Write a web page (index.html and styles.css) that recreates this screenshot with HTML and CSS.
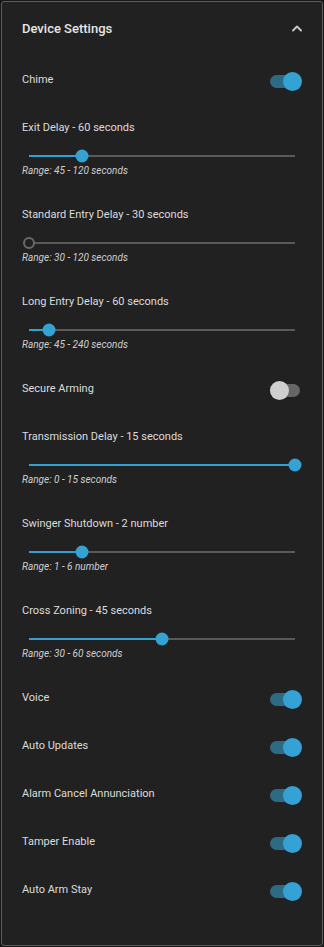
FILE: index.html
```html
<!DOCTYPE html>
<html>
<head>
<meta charset="utf-8">
<link rel="stylesheet" href="styles.css">
</head>
<body>
<div class="card">
  <div class="header">
    <span class="title">Device Settings</span>
    <svg class="chev" width="12" height="8" viewBox="0 0 12 8"><path d="M2 6.5 L6 2.5 L10 6.5" fill="none" stroke="#c4c4c4" stroke-width="2" stroke-linecap="round" stroke-linejoin="round"/></svg>
  </div>

  <div class="row"><span class="label">Chime</span><span class="toggle on"><span class="track"></span><span class="knob"></span></span></div>

  <div class="sblock">
    <div class="slabel">Exit Delay - 60 seconds</div>
    <div class="slider"><div class="rail"><div class="fill" style="width:20%"></div><div class="thumb" style="left:20%"></div></div></div>
    <div class="range">Range: 45 - 120 seconds</div>
  </div>

  <div class="sblock">
    <div class="slabel">Standard Entry Delay - 30 seconds</div>
    <div class="slider"><div class="rail"><div class="fill" style="width:0%"></div><div class="thumb zero" style="left:0%"></div></div></div>
    <div class="range">Range: 30 - 120 seconds</div>
  </div>

  <div class="sblock">
    <div class="slabel">Long Entry Delay - 60 seconds</div>
    <div class="slider"><div class="rail"><div class="fill" style="width:7.69%"></div><div class="thumb" style="left:7.69%"></div></div></div>
    <div class="range">Range: 45 - 240 seconds</div>
  </div>

  <div class="row"><span class="label">Secure Arming</span><span class="toggle off"><span class="track"></span><span class="knob"></span></span></div>

  <div class="sblock">
    <div class="slabel">Transmission Delay - 15 seconds</div>
    <div class="slider"><div class="rail"><div class="fill" style="width:100%"></div><div class="thumb" style="left:100%"></div></div></div>
    <div class="range">Range: 0 - 15 seconds</div>
  </div>

  <div class="sblock">
    <div class="slabel">Swinger Shutdown - 2 number</div>
    <div class="slider"><div class="rail"><div class="fill" style="width:20%"></div><div class="thumb" style="left:20%"></div></div></div>
    <div class="range">Range: 1 - 6 number</div>
  </div>

  <div class="sblock">
    <div class="slabel">Cross Zoning - 45 seconds</div>
    <div class="slider"><div class="rail"><div class="fill" style="width:50%"></div><div class="thumb" style="left:50%"></div></div></div>
    <div class="range">Range: 30 - 60 seconds</div>
  </div>

  <div class="row"><span class="label">Voice</span><span class="toggle on"><span class="track"></span><span class="knob"></span></span></div>
  <div class="row"><span class="label">Auto Updates</span><span class="toggle on"><span class="track"></span><span class="knob"></span></span></div>
  <div class="row"><span class="label">Alarm Cancel Annunciation</span><span class="toggle on"><span class="track"></span><span class="knob"></span></span></div>
  <div class="row"><span class="label">Tamper Enable</span><span class="toggle on"><span class="track"></span><span class="knob"></span></span></div>
  <div class="row"><span class="label">Auto Arm Stay</span><span class="toggle on"><span class="track"></span><span class="knob"></span></span></div>
</div>
</body>
</html>
```

FILE: styles.css
```css
html, body {
  margin: 0;
  padding: 0;
  background: #161616;
}
body {
  font-family: Roboto, "Liberation Sans", sans-serif;
  color: #e2e2e2;
}
.card {
  box-sizing: border-box;
  margin: 1px;
  height: 945px;
  border: 1px solid #5c5c5c;
  border-radius: 3px;
  background: #212121;
  padding: 0 20px;
}
.header {
  height: 53px;
  display: flex;
  align-items: center;
  justify-content: space-between;
}
.title {
  font-size: 13px;
  font-weight: 500;
  color: #e6e6e6;
}
.chev {
  margin-right: -1px;
  margin-top: -2px;
}
.header + .row {
  margin-top: 1px;
}
.row {
  height: 48px;
  display: flex;
  align-items: center;
  justify-content: space-between;
}
.label, .slabel {
  font-size: 11px;
  line-height: 20px;
  color: #dcdcdc;
}
.toggle {
  position: relative;
  width: 32px;
  height: 20px;
  margin-top: 3px;
}
.toggle .track {
  position: absolute;
  left: 0;
  top: 3px;
  width: 30px;
  height: 13px;
  border-radius: 7px;
  background: #2c6a86;
}
.toggle .knob {
  position: absolute;
  top: 0;
  width: 19px;
  height: 19px;
  border-radius: 50%;
  background: #34a2d2;
}
.toggle.on .knob { right: 0; }
.toggle.off .track { background: #666666; }
.toggle.off .knob { left: 0; background: #cfcfcf; }

.sblock {
  padding-top: 14px;
  padding-bottom: 14px;
  height: 87px;
  box-sizing: border-box;
}
.slider {
  margin-top: 10px;
  height: 16px;
  padding: 0 7px;
  display: flex;
  align-items: center;
}
.rail {
  position: relative;
  flex: 1;
  height: 2px;
  background: #5a5a5a;
}
.fill {
  height: 2px;
  background: #32a0d0;
}
.thumb {
  position: absolute;
  top: 1px;
  width: 13px;
  height: 13px;
  border-radius: 50%;
  background: #34a2d2;
  transform: translate(-50%, -50%);
}
.thumb.zero {
  box-sizing: border-box;
  width: 12px;
  height: 12px;
  background: #212121;
  border: 2px solid #6a6a6a;
}
.range {
  margin-top: 1px;
  font-size: 10px;
  line-height: 12px;
  font-style: italic;
  color: #cfcfcf;
}
```
